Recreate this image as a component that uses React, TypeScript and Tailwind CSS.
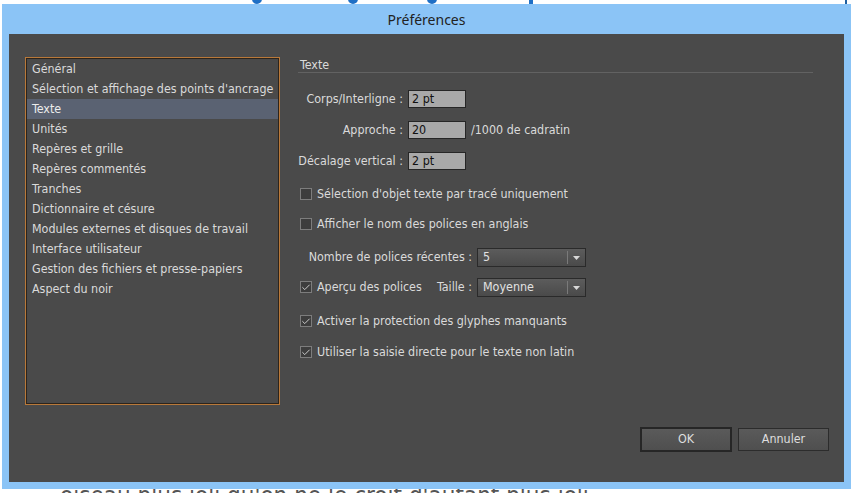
import { Check } from "lucide-react"

/* ===== Constants ===== */
const font = "font-['DejaVu_Sans_Condensed','DejaVu_Sans',sans-serif]"

const sections = [
  "Général",
  "Sélection et affichage des points d'ancrage",
  "Texte",
  "Unités",
  "Repères et grille",
  "Repères commentés",
  "Tranches",
  "Dictionnaire et césure",
  "Modules externes et disques de travail",
  "Interface utilisateur",
  "Gestion des fichiers et presse-papiers",
  "Aspect du noir",
]

/* ===== Small controls ===== */
function Field({ label, value, suffix }: { label: string; value: string; suffix?: string }) {
  return (
    <div className="flex items-center h-[18px]">
      <span className="w-[110px] pr-[5px] text-right whitespace-nowrap">{label}</span>
      <div className="w-[58px] h-[18px] bg-[#a9a9a9] border border-[#262626] text-[#111] px-[3px] leading-[16px]">
        {value}
      </div>
      {suffix && <span className="ml-[5px]">{suffix}</span>}
    </div>
  )
}

function CheckBox({ checked }: { checked?: boolean }) {
  return (
    <div className="w-[12px] h-[12px] shrink-0 border border-[#7d7d7d] bg-[#3d3d3d] flex items-center justify-center">
      {checked && <Check className="size-[11px] text-[#d6d6d6]" strokeWidth={2.2} />}
    </div>
  )
}

function CheckRow({ label, checked, className }: { label: string; checked?: boolean; className?: string }) {
  return (
    <div className={`flex items-center h-[18px] pl-[2px] ${className ?? ""}`}>
      <CheckBox checked={checked} />
      <span className="ml-[5px] whitespace-nowrap">{label}</span>
    </div>
  )
}

function Select({ value }: { value: string }) {
  return (
    <div className="w-[109px] h-[19px] flex items-center border border-[#2a2a2a] bg-gradient-to-b from-[#5c5c5c] to-[#4a4a4a]">
      <span className="flex-1 pl-[5px] text-[#e2e2e2]">{value}</span>
      <div className="w-px h-[13px] bg-[#7a7a7a]" />
      <div className="w-[17px] flex justify-center">
        <svg width="7" height="4" viewBox="0 0 7 4">
          <path d="M0 0h7L3.5 4z" fill="#d8d8d8" />
        </svg>
      </div>
    </div>
  )
}

function Button({ label, primary }: { label: string; primary?: boolean }) {
  return (
    <div
      className={`flex items-center justify-center bg-gradient-to-b from-[#5a5a5a] to-[#4f4f4f] text-[#dedede] ${
        primary ? "w-[92px] h-[25px] border-2 border-[#262626]" : "w-[91px] h-[23px] border border-[#2c2c2c]"
      }`}
    >
      {label}
    </div>
  )
}

/* ===== Main Page ===== */
export default function App() {
  return (
    <div className={`w-[857px] h-[493px] bg-white overflow-hidden relative ${font}`}>
      {/* Background bits peeking out */}
      <div className="absolute top-0 left-0 w-full h-[4px] overflow-hidden">
        <div className="absolute left-[252px] -top-[6px] size-[10px] rounded-full bg-[#1f6fc5]" />
        <div className="absolute left-[348px] -top-[6px] size-[10px] rounded-full bg-[#1f6fc5]" />
        <div className="absolute left-[427px] -top-[6px] size-[10px] rounded-full bg-[#1f6fc5]" />
        <div className="absolute left-[529px] -top-[3px] w-[4px] h-[7px] bg-[#1f6fc5]" />
        <div className="absolute left-[845px] top-0 w-[2px] h-[4px] bg-[#1f5f9f]" />
      </div>
      <div className="absolute left-[60px] top-[486px] h-[7px] overflow-hidden text-[24px] leading-[24px] text-[#555] whitespace-nowrap">
        <span className="relative top-[-2px]">oiseau plus joli qu'on ne le croit d'autant plus joli</span>
      </div>

      {/* Dialog window */}
      <div className="relative ml-[2px] mt-[4px] w-[849px] h-[485px] bg-[#8bc4f6] flex flex-col px-[7px] pb-[7px]">
        <div className="h-[30px] flex items-center justify-center font-['Noto_Sans',sans-serif] text-[14px] text-[#222]">
          Préférences
        </div>

        <div className="flex-1 bg-[#4a4a4a] flex flex-col text-[12.4px] text-[#dadada]">
          <div className="flex pt-[23px] pl-[16px] pr-[31px]">
            {/* Section list */}
            <div className="w-[255px] h-[348px] border border-[#b9793a] shadow-[inset_0_0_0_1px_#2c241c] p-[1px]">
              {sections.map((s) => (
                <div
                  key={s}
                  className={`h-[20px] leading-[20px] pl-[5px] whitespace-nowrap ${
                    s === "Texte" ? "bg-[#5a6272] text-[#ececec]" : ""
                  }`}
                >
                  {s}
                </div>
              ))}
            </div>

            {/* Settings panel */}
            <div className="flex-1 ml-[18px] flex flex-col">
              <div className="h-[16px] border-b border-[#626262] pl-[2px] leading-[15px]">Texte</div>

              <div className="mt-[17px] flex flex-col gap-[13px]">
                <Field label="Corps/Interligne :" value="2 pt" />
                <Field label="Approche :" value="20" suffix="/1000 de cadratin" />
                <Field label="Décalage vertical :" value="2 pt" />
              </div>

              <CheckRow className="mt-[15px]" label="Sélection d'objet texte par tracé uniquement" />
              <CheckRow className="mt-[12px]" label="Afficher le nom des polices en anglais" />

              <div className="mt-[15px] flex items-center">
                <span className="w-[179px] pr-[5px] text-right whitespace-nowrap">Nombre de polices récentes :</span>
                <Select value="5" />
              </div>

              <div className="mt-[11px] flex items-center">
                <div className="w-[179px] flex items-center pl-[2px] pr-[5px] whitespace-nowrap">
                  <CheckBox checked />
                  <span className="ml-[5px]">Aperçu des polices</span>
                  <span className="ml-auto">Taille :</span>
                </div>
                <Select value="Moyenne" />
              </div>

              <CheckRow checked className="mt-[15px]" label="Activer la protection des glyphes manquants" />
              <CheckRow checked className="mt-[13px]" label="Utiliser la saisie directe pour le texte non latin" />
            </div>
          </div>

          {/* Footer buttons */}
          <div className="mt-[22px] flex justify-end items-center gap-[6px] pr-[15px]">
            <Button label="OK" primary />
            <Button label="Annuler" />
          </div>
        </div>
      </div>
    </div>
  )
}
